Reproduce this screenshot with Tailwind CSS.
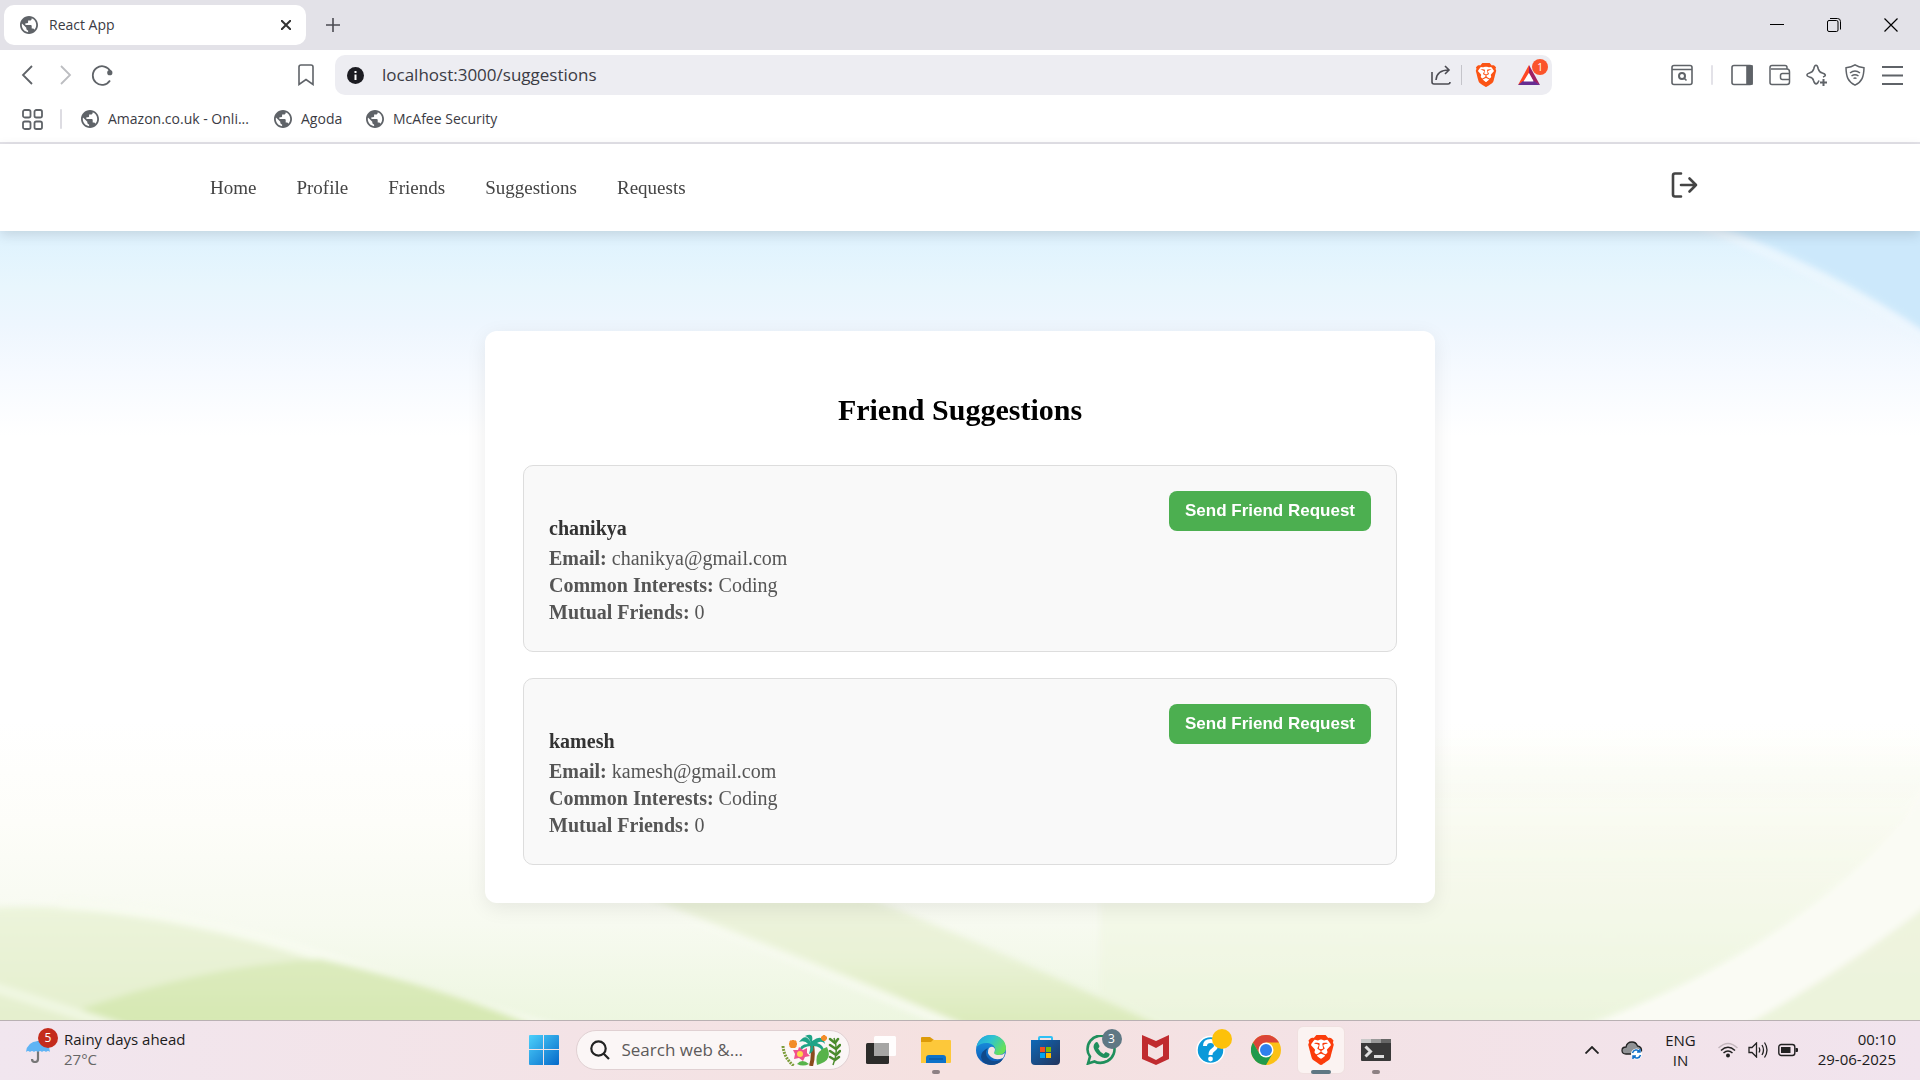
<!DOCTYPE html>
<html lang="en">
<head>
<meta charset="utf-8">
<title>React App</title>
<script src="https://cdn.jsdelivr.net/npm/@tailwindcss/browser@4"></script>
</head>
<body class="flex min-h-screen flex-col bg-white font-['Open_Sans',sans-serif] text-[#3b3b44]">

<svg class="hidden" aria-hidden="true">
  <symbol id="globe" viewBox="2 2 20 20"><path fill="#5f6368" d="M12 2C6.48 2 2 6.48 2 12s4.48 10 10 10 10-4.480 10-10S17.520 2 12 2zm-1 17.930c-3.950-.490-7-3.850-7-7.930 0-.620.080-1.210.210-1.790L9 15v1c0 1.100.900 2 2 2v1.930zm6.900-2.540c-.260-.810-1-1.390-1.900-1.390h-1v-3c0-.550-.450-1-1-1H8v-2h2c.550 0 1-.450 1-1V7h2c1.100 0 2-.900 2-2v-.410c2.930 1.190 5 4.060 5 7.410 0 2.080-.800 3.970-2.100 5.390z"/></symbol>
  <symbol id="brave" viewBox="0 0 24 24">
    <path fill="#fff" d="M5 4h14l2 4-4 11-5 3-5-3L3 8z"/>
    <path d="M15.68 0l2.096 2.38s1.84-.512 2.709.358c.868.87 1.584 1.638 1.584 1.638l-.562 1.381.715 2.047s-2.104 7.98-2.35 8.955c-.486 1.919-.818 2.66-2.198 3.633-1.38.972-3.884 2.66-4.293 2.916-.409.256-.92.692-1.38.692-.46 0-.97-.436-1.38-.692a185.796 185.796 0 01-4.293-2.916c-1.38-.973-1.712-1.714-2.197-3.633-.247-.975-2.351-8.955-2.351-8.955l.715-2.047-.562-1.381s.716-.768 1.585-1.638c.868-.87 2.708-.358 2.708-.358L8.321 0h7.36zm-3.679 14.936c-.14 0-1.038.317-1.758.69-.72.373-1.242.637-1.409.742-.167.104-.065.301.087.409.152.107 2.194 1.69 2.393 1.866.198.175.489.464.687.464.198 0 .49-.29.688-.464.198-.175 2.24-1.759 2.392-1.866.152-.108.254-.305.087-.41-.167-.104-.689-.368-1.41-.741-.72-.373-1.617-.69-1.757-.69zm0-11.278s-.409.001-1.022.206-1.278.46-1.584.46c-.307 0-2.581-.434-2.581-.434S4.119 7.152 4.119 7.849c0 .697.339.881.68 1.243l2.02 2.149c.192.203.59.511.356 1.066-.235.555-.58 1.26-.196 1.977.384.716 1.042 1.194 1.464 1.115.421-.08 1.412-.598 1.776-.834.364-.237 1.518-1.19 1.518-1.554 0-.365-1.193-1.02-1.413-1.168-.22-.15-1.226-.725-1.247-.95-.02-.227-.012-.293.284-.851.297-.559.831-1.304.742-1.8-.089-.495-.95-.753-1.565-.986-.615-.232-1.799-.671-1.947-.74-.148-.068-.11-.133.339-.175.448-.043 1.719-.212 2.292-.052.573.16 1.552.403 1.632.532.079.13.149.134.067.579-.081.445-.5 2.581-.541 2.96-.04.38-.12.63.288.724.409.094 1.097.256 1.333.256s.924-.162 1.333-.256c.408-.093.329-.344.288-.723-.04-.38-.46-2.516-.541-2.961-.082-.445-.012-.45.067-.579.08-.129 1.059-.372 1.632-.532.573-.16 1.845.009 2.292.052.449.042.487.107.339.175-.148.069-1.332.508-1.947.74-.615.233-1.476.49-1.565.986-.09.496.445 1.241.742 1.8.297.558.304.624.284.85-.02.226-1.026.802-1.247.95-.22.15-1.413.804-1.413 1.169 0 .364 1.154 1.317 1.518 1.554.364.236 1.355.755 1.776.834.422.079 1.08-.4 1.464-1.115.384-.716.039-1.422-.195-1.977-.235-.555.163-.863.355-1.066l2.02-2.149c.341-.362.68-.546.68-1.243 0-.697-2.695-3.96-2.695-3.96s-2.274.436-2.58.436c-.307 0-.972-.256-1.585-.461-.613-.205-1.022-.206-1.022-.206z"/>
  </symbol>
</svg>

<!-- Tab strip -->
<div class="flex h-[50px] items-center bg-[#e3e2e8] pl-1">
  <div class="flex h-10 w-[302px] items-center rounded-[10px] bg-white pr-[10px] pl-4">
    <svg class="size-[18px]"><use href="#globe"/></svg>
    <span class="ml-[11px] flex-1 text-sm">React App</span>
    <button aria-label="Close tab" class="flex size-5 items-center justify-center"><svg class="size-[10px]" viewBox="0 0 10 10" stroke="#333" stroke-width="2"><path d="M0 0l10 10M10 0L0 10"/></svg></button>
  </div>
  <button aria-label="New tab" class="ml-5 flex size-[14px] items-center justify-center"><svg class="size-[14px]" viewBox="0 0 14 14" stroke="#4b4b52" stroke-width="1.600"><path d="M7 0v14M0 7h14"/></svg></button>
  <div class="ml-auto flex items-center pr-px text-black">
    <button aria-label="Minimize" class="flex h-12 w-[57px] items-center justify-center"><svg class="size-[14px]" viewBox="0 0 14 14" stroke="currentColor"><path d="M0 6.500h14"/></svg></button>
    <button aria-label="Restore" class="flex h-12 w-[57px] items-center justify-center"><svg class="size-[14px]" viewBox="0 0 14 14" fill="none" stroke="currentColor"><rect x=".5" y="2.500" width="10.500" height="11" rx="1.500"/><path d="M3 .5h7.500q3 0 3 3v8"/></svg></button>
    <button aria-label="Close" class="flex h-12 w-[57px] items-center justify-center"><svg class="size-[14px]" viewBox="0 0 14 14" stroke="currentColor" stroke-width="1.200"><path d="M.5.5l13 13M13.500.5l-13 13"/></svg></button>
  </div>
</div>

<!-- Toolbar -->
<div class="flex h-[50px] items-center">
  <div class="flex w-[335px] items-center pl-4">
    <button aria-label="Back" class="flex size-6 items-center justify-center"><svg class="size-5" viewBox="0 0 20 20" fill="none" stroke="#5f6368" stroke-width="1.800"><path d="M14 1L5 10l9 9"/></svg></button>
    <button aria-label="Forward" class="ml-[13px] flex size-6 items-center justify-center"><svg class="size-5" viewBox="0 0 20 20" fill="none" stroke="#bcbdc1" stroke-width="1.800"><path d="M6 1l9 9-9 9"/></svg></button>
    <button aria-label="Reload" class="ml-[13px] flex size-6 items-center justify-center"><svg class="size-[22px]" viewBox="0 0 22 22" fill="none" stroke="#5f6368" stroke-width="1.800"><path d="M19 16.500A9.300 9.300 0 1 1 19.500 7.500"/><circle cx="18.800" cy="8.700" r="2.600" fill="#5f6368" stroke="none"/></svg></button>
    <button aria-label="Bookmark this page" class="ml-auto mr-[17px] flex size-6 items-center justify-center"><svg class="h-[22px] w-4" viewBox="0 0 16 22" fill="none" stroke="#5f6368" stroke-width="1.600"><path d="M1 3q0-2 2-2h10q2 0 2 2v17.500l-7-5-7 5z"/></svg></button>
  </div>
  <div class="flex h-10 min-w-0 flex-1 items-center rounded-[10px] bg-[#ededf2] pr-[10px] pl-3">
    <svg class="size-[17px]" viewBox="0 0 17 17"><circle cx="8.500" cy="8.500" r="8.500" fill="#1c1c22"/><path stroke="#fff" stroke-width="2" d="M8.500 4v2M8.500 7.500V13"/></svg>
    <input aria-label="Address" value="localhost:3000/suggestions" class="ml-[18px] min-w-0 flex-1 bg-transparent text-[17px] text-[#3b3b44] outline-none">
    <button aria-label="Share"><svg class="size-5" viewBox="0 0 20 20" fill="none" stroke="#4b4b52" stroke-width="1.600"><path d="M1 7v10q0 2 2 2h14q2 0 2-2"/><path d="M5 15C5.500 8 10 5 18 5M14 1l4 4-4 4"/></svg></button>
    <span class="ml-[10px] h-5 w-px bg-[#c4c4ca]"></span>
    <button aria-label="Brave Shields" class="ml-3"><svg class="size-6" fill="#fb5415"><use href="#brave"/></svg></button>
    <button aria-label="Brave Rewards" class="relative ml-[18px]"><svg class="h-6 w-[26px]" viewBox="0 0 26 24"><path fill="#ff4724" d="M13 2v9L7.500 19 2 22z"/><path fill="#9e1f63" d="M13 2l11 20-6-3-5-9z"/><path fill="#662d91" d="M2 22l5-4h11l6 4z"/><path fill="#fff" d="M12.700 10L7.500 18.500h10z"/></svg><span class="absolute -top-1 left-4 flex size-4 items-center justify-center rounded-full bg-[#fb542b] text-[10px] leading-none text-white">1</span></button>
  </div>
  <div class="flex w-[368px] items-center justify-end pr-[17px]">
    <button aria-label="Search tabs"><svg class="size-[22px]" viewBox="0 0 22 22" fill="none" stroke="#5f6368" stroke-width="1.600"><rect x="1" y="1.500" width="20" height="19" rx="2"/><path d="M1 5.500h20M13 14l2.500 2.500"/><circle cx="11" cy="12" r="3" stroke-width="2"/></svg></button>
    <span class="ml-[18px] h-5 w-[2px] rounded bg-[#e3e2e8]"></span>
    <button aria-label="Sidebar" class="ml-[18px]"><svg class="size-[22px]" viewBox="0 0 22 22" fill="none" stroke="#5f6368" stroke-width="1.600"><rect x="1" y="1.500" width="20" height="19" rx="2"/><path fill="#5f6368" d="M16 2h5v18h-5z"/></svg></button>
    <button aria-label="Wallet" class="ml-4"><svg class="size-[22px]" viewBox="0 0 22 22" fill="none" stroke="#5f6368" stroke-width="1.500"><path d="M18 5V3.500q0-2-2-2H3q-2 0-2 2v15q0 2 2 2h15q2.500 0 2.500-2.500v-10q0-3-2.500-3H2"/><path d="M21 9.500h-7.500q-2 0-2 2v2q0 2 2 2H21"/></svg></button>
    <button aria-label="Leo AI" class="ml-[15px]"><svg class="size-[22px]" viewBox="0 0 22 22" fill="none" stroke="#5f6368" stroke-width="1.600"><path stroke-linejoin="round" d="M13 16.500c-1.500 4-4 5-5.500 0C7 14 6 13.500 3.500 13c-3.500-1-3.500-3 0-4C6 8.300 7 7.500 7.700 5c1-5 3.600-5 4.600 0 .7 2.500 1.500 3.300 4 4 3.700 1 4 3 .7 4"/><path stroke-width="2" d="M17.500 15v7M14 18.500h7"/></svg></button>
    <button aria-label="VPN" class="ml-4"><svg class="size-[22px]" viewBox="0 0 22 22" fill="none" stroke="#5f6368" stroke-width="1.500"><path d="M11 .8c3 2 5 2.500 9 3-.2 9-2 14-9 17.400C4 17.800 2.200 13 2 3.800c4-.5 6-1 9-3z"/><path d="M6 9q5-4 10 0M7.500 12q3.500-2.500 7 0M9.500 14.500q1.500-1 3 0"/></svg></button>
    <button aria-label="Menu" class="ml-4"><svg class="size-[21px]" viewBox="0 0 21 21" stroke="#5f6368" stroke-width="2"><path d="M0 2h21M0 10.500h21M0 19h21"/></svg></button>
  </div>
</div>

<!-- Bookmarks bar -->
<div class="flex h-11 items-center border-b-2 border-[#e3e2e8] pb-1 pl-[22px] text-sm">
  <button aria-label="All apps"><svg class="size-[21px]" viewBox="0 0 21 21" fill="none" stroke="#5f6368" stroke-width="1.800"><rect x="1" y="1" width="7.500" height="7.500" rx="1.800"/><rect x="12.500" y="1" width="7.500" height="7.500" rx="1.800"/><rect x="1" y="12.500" width="7.500" height="7.500" rx="1.800"/><rect x="12.500" y="12.500" width="7.500" height="7.500" rx="1.800"/></svg></button>
  <span class="ml-[17px] h-5 w-[2px] rounded bg-[#dddce2]"></span>
  <a href="#" class="ml-[19px] flex w-[193px] items-center gap-[9px]"><svg class="size-[18px]"><use href="#globe"/></svg>Amazon.co.uk - Onli...</a>
  <a href="#" class="flex w-[92px] items-center gap-[9px]"><svg class="size-[18px]"><use href="#globe"/></svg>Agoda</a>
  <a href="#" class="flex items-center gap-[9px]"><svg class="size-[18px]"><use href="#globe"/></svg>McAfee Security</a>
</div>

<!-- Web app -->
<div class="flex flex-1 flex-col font-['Liberation_Serif',serif]">
  <header class="relative z-10 bg-white shadow-[0_4px_12px_rgba(0,0,0,0.12)]">
    <div class="mx-auto flex h-[87px] max-w-[1500px] items-center justify-between pr-3">
      <nav class="flex gap-10 pt-[2px] text-[19px] text-[#444]">
        <a href="#">Home</a><a href="#">Profile</a><a href="#">Friends</a><a href="#">Suggestions</a><a href="#">Requests</a>
      </nav>
      <button aria-label="Log out" class="pb-[6px]"><svg class="h-[26px] w-7" viewBox="0 0 28 26" fill="none" stroke="#444" stroke-width="2.600" stroke-linecap="round" stroke-linejoin="round"><path d="M11 1.500H5q-2 0-2 2v19q0 2 2 2h6M11 13h15M19.500 6.500l6.500 6.500-6.500 6.500"/></svg></button>
    </div>
  </header>

  <main class="relative flex-1 px-6 pt-[100px] pb-[114px]">
    <svg class="absolute inset-0 size-full" viewBox="0 0 1920 789" preserveAspectRatio="none" aria-hidden="true">
      <defs>
        <linearGradient id="sky" x1="0" y1="0" x2="0" y2="1"><stop offset="0" stop-color="#def2fe"/><stop offset=".07" stop-color="#e8f6fd"/><stop offset=".12" stop-color="#eef6fe"/><stop offset=".18" stop-color="#f6faff"/><stop offset=".26" stop-color="#fff"/><stop offset=".62" stop-color="#fff"/><stop offset=".75" stop-color="#fdfdf9"/><stop offset=".88" stop-color="#f7faf0"/><stop offset="1" stop-color="#edf6e0"/></linearGradient>
        <linearGradient id="meadow" x1="0" y1="0" x2="0" y2="1"><stop offset="0" stop-color="#f1f6e0" stop-opacity="0"/><stop offset=".5" stop-color="#f3f7e6"/><stop offset="1" stop-color="#ebf3da"/></linearGradient>
        <linearGradient id="hillA" x1="0" y1="0" x2="0" y2="1"><stop offset="0" stop-color="#ecf4db"/><stop offset="1" stop-color="#e4efcd"/></linearGradient>
        <linearGradient id="hillB" x1="0" y1="0" x2="0" y2="1"><stop offset="0" stop-color="#dcebbe"/><stop offset="1" stop-color="#d6e8b2"/></linearGradient>
        <linearGradient id="ridge" x1="0" y1="0" x2="0" y2="1"><stop offset="0" stop-color="#edf3dd"/><stop offset=".5" stop-color="#e9f2d6"/><stop offset="1" stop-color="#dbeaba"/></linearGradient>
        <linearGradient id="edge" x1="0" y1="0" x2="1" y2="0"><stop offset="0" stop-color="#fafcf4" stop-opacity=".2"/><stop offset="1" stop-color="#fafcf4" stop-opacity=".8"/></linearGradient>
        <filter id="soft" x="-5%" y="-5%" width="110%" height="110%"><feGaussianBlur stdDeviation="3"/></filter>
      </defs>
      <path fill="url(#sky)" d="M0 0h1920v789H0z"/>
      <g filter="url(#soft)">
        <path fill="#cce8fb" d="M1708-10Q1830 35 1930 104V-10z"/>
        <path fill="none" stroke="#eef7fd" stroke-opacity=".7" stroke-width="9" d="M1700-6Q1825 42 1930 112"/>
        <path fill="url(#meadow)" d="M1100 490H1930V800H1100Z" opacity=".6"/>
        <path fill="#fafbf4" d="M1585 795Q1790 720 1905 589L1930 540V672Q1850 735 1745 795z"/>
        <path fill="#ecf3db" opacity=".8" d="M1745 795Q1850 735 1930 672V795z"/>
        <path fill="url(#hillA)" d="M-10 677Q130 668 320 728L440 795H-10z"/>
        <path fill="none" stroke="#f8fbf0" stroke-opacity=".8" stroke-width="12" d="M60 672Q190 680 330 728T560 800"/>
        <path fill="url(#hillB)" d="M70 782Q200 735 320 728Q440 755 535 795H110z"/>
        <path fill="none" stroke="#f0f7e2" stroke-width="10" d="M-10 755L130 800"/>
        <path fill="url(#ridge)" d="M630 660H850Q980 710 1160 795H960Q790 725 630 660z"/>
        <path fill="none" stroke="url(#edge)" stroke-width="10" d="M620 660Q790 725 960 797"/>
      </g>
    </svg>

    <section class="relative mx-auto flex max-w-[950px] flex-col rounded-xl bg-white px-[38px] pt-[59px] pb-[38px] shadow-[0_5px_20px_rgba(0,0,0,0.08)]">
      <h2 class="mb-[35px] text-center text-[30px] leading-10 font-bold text-black">Friend Suggestions</h2>
      <ul class="flex flex-col gap-[26px]">
        <li class="flex items-start justify-between rounded-[10px] border border-[#ddd] bg-[#f9f9f9] p-[25px] text-[20px] leading-[27px] text-[#555]">
          <div class="pt-6">
            <h3 class="mb-[3px] font-bold text-[#333]">chanikya</h3>
            <p><strong>Email:</strong> chanikya@gmail.com</p>
            <p><strong>Common Interests:</strong> Coding</p>
            <p><strong>Mutual Friends:</strong> 0</p>
          </div>
          <button class="h-10 rounded-lg bg-[#4caf50] px-4 font-['Liberation_Sans',sans-serif] text-[17px] leading-5 font-bold text-white">Send Friend Request</button>
        </li>
        <li class="flex items-start justify-between rounded-[10px] border border-[#ddd] bg-[#f9f9f9] p-[25px] text-[20px] leading-[27px] text-[#555]">
          <div class="pt-6">
            <h3 class="mb-[3px] font-bold text-[#333]">kamesh</h3>
            <p><strong>Email:</strong> kamesh@gmail.com</p>
            <p><strong>Common Interests:</strong> Coding</p>
            <p><strong>Mutual Friends:</strong> 0</p>
          </div>
          <button class="h-10 rounded-lg bg-[#4caf50] px-4 font-['Liberation_Sans',sans-serif] text-[17px] leading-5 font-bold text-white">Send Friend Request</button>
        </li>
      </ul>
    </section>
  </main>
</div>

<!-- Taskbar -->
<footer class="relative z-10 grid h-[60px] grid-cols-[1fr_auto_1fr] items-center border-t border-[#b9b1b3] bg-linear-to-r from-[#f1e6ef] via-[#f5e1e0] to-[#f1e4ee] pb-[2px] text-[#1b1b1b]">
  <button class="flex items-center pl-6 text-left text-[15px] leading-5">
    <span class="relative mr-[14px] block size-[26px]">
      <svg class="size-[26px]" viewBox="0 0 26 26"><path fill="none" stroke="#777" stroke-width="2.200" d="M14 4v18q0 3-3 3t-3-3"/><path fill="#5fb4f5" d="M2 15Q3 5 14 4q11 1 12 11-2-2-4 0-2-2-4 0-2-2-4 0-2-2-4 0-2-2-4 0-2-2-4 0z"/></svg>
      <span class="absolute -top-[9px] left-[14px] flex size-5 items-center justify-center rounded-full bg-[#c42b1c] text-xs leading-none text-white">5</span>
    </span>
    <span class="pb-px"><span class="block">Rainy days ahead</span><span class="block text-[#666]">27°C</span></span>
  </button>

  <div class="flex items-center">
    <button aria-label="Start" class="flex w-[55px] justify-center"><svg class="size-[30px]" viewBox="0 0 30 30"><defs><linearGradient id="win" x1="0" y1="0" x2="1" y2="1"><stop offset="0" stop-color="#4cd0fb"/><stop offset="1" stop-color="#0569c9"/></linearGradient></defs><path fill="url(#win)" d="M1 0h13v14H0V1q0-1 1-1zM15 0h14q1 0 1 1v13H15zM0 15h14v15H1q-1 0-1-1zM15 15h15v14q0 1-1 1H15z"/></svg></button>
    <label class="mx-1 flex h-10 w-[274px] items-center rounded-full border border-[#e0d0d2] bg-[#fbf6f6] pr-2 pl-[13px]">
      <svg class="size-5" viewBox="0 0 20 20" fill="none" stroke="#222" stroke-width="2.200"><circle cx="8.500" cy="8.500" r="7.200"/><path d="M13.500 13.500l5.500 5.500"/></svg>
      <input aria-label="Search" placeholder="Search web &amp;..." class="ml-2 w-[150px] bg-transparent pl-1 text-[17px] outline-none placeholder:text-[#5d5a5a]">
      <svg class="ml-auto h-8 w-[60px]" viewBox="0 0 60 32" fill="none">
        <path stroke="#8a4b1c" stroke-width="4" d="M30 32q3-10 1-21"/>
        <path fill="#1fa487" d="M30 9Q25-2 18 8q6-2 9 2-9 0-9 9 4-7 12-7l-2 8q6-3 4-8 9 0 10 8 3-8-6-11 5-3 8 1-2-11-13-3Q33-2 24 2q4 1 6 7z"/>
        <path stroke="#7c9c3a" stroke-width="3" stroke-dasharray="2 1" d="M2 12q1 12 11 20"/>
        <path stroke="#4b8b2c" stroke-width="1.500" d="M53 4q5 13-1 27"/>
        <path stroke="#4b8b2c" stroke-width="2.500" stroke-linecap="round" d="M54 9l-5-4M54 9l3-4M55 15l-6-4M55 15l4-4M55 21l-6-4M55 21l4-4M54 26l-5-3M54 26l4-3"/>
        <path fill="#58b34a" d="M36 31q-3-14 10-18 6 13-7 17zM16 30q5-6 12 0-6 3-12 0z"/>
        <path fill="#f0508c" d="M18 13l4 3 4-2 0 5 3 3-5 1-2 4-4-3-5 1 1-5-2-4 5 0z"/><circle cx="19" cy="20" r="3" fill="#ffd54a"/>
        <path stroke="#f28c28" stroke-width="2.500" d="M12 6v8M8 10h8M9 7l6 6M15 7l-6 6M43 1v6M40 4h6M41 2l4 4M45 2l-4 4"/>
      </svg>
    </label>
    <button aria-label="Task view" class="flex w-[55px] justify-center"><svg class="size-[30px]" viewBox="0 0 30 30"><rect y="8" width="23" height="21" rx="1.500" fill="#2c2c2a"/><rect x="8" y="1" width="22" height="20" rx="1.500" fill="#fff" opacity=".93"/><path fill="#a6a5a4" d="M8 8h15v13H9q-1 0-1-1z"/></svg></button>
    <button aria-label="File Explorer" class="relative flex w-[55px] justify-center"><svg class="size-[30px]" viewBox="0 0 30 30"><path fill="#dd9b09" d="M0 3q0-1 1-1h8l4 3v6H0z"/><path fill="#fdc83a" d="M0 7h10l2-2h17q1 0 1 1v21q0 1-1 1H0z"/><path fill="#0c72c9" d="M5 28v-5q0-3 3-3h14q3 0 3 3v5z"/><path stroke="#084f93" d="M8 24h14"/></svg><span class="absolute -bottom-[9px] h-1 w-2 rounded bg-[#8d8184]"></span></button>
    <button aria-label="Microsoft Edge" class="flex w-[55px] justify-center"><svg class="size-[30px]" viewBox="0 0 30 30"><defs><linearGradient id="edgeTop" x1="0" y1="0" x2="1" y2=".5"><stop offset="0" stop-color="#1fa0e0"/><stop offset=".5" stop-color="#2fc3d0"/><stop offset="1" stop-color="#66e05a"/></linearGradient><linearGradient id="edgeSide" x1="0" y1="0" x2="0" y2="1"><stop offset="0" stop-color="#1b9be6"/><stop offset="1" stop-color="#0c55b4"/></linearGradient></defs><circle cx="15" cy="15" r="15" fill="url(#edgeSide)"/><path fill="url(#edgeTop)" d="M.5 12C2 4 8 0 15 0c9 0 15 6 15 13 0 5-4 7-8 7-3 0-4-1-4-2s2-2 1-5C17 7 6 6 .5 12z"/><path fill="#114a8b" d="M12 13q-4 5 0 10 5 6 15 1-4 6-12 6-9-1-10-8 0-6 7-9z"/><path fill="#f5e3e2" d="M13 13q4-3 6 1 0 2-1 4 1 2 5 2 4 0 6-2-1 4-2 5-7 3-12-1-5-4-2-9z"/></svg></button>
    <button aria-label="Microsoft Store" class="flex w-[55px] justify-center"><svg class="size-[30px]" viewBox="0 0 30 30"><defs><linearGradient id="store" x1="0" y1="0" x2="1" y2="1"><stop offset="0" stop-color="#0e69b8"/><stop offset="1" stop-color="#23345c"/></linearGradient></defs><path fill="none" stroke="#2fc0f5" stroke-width="2" d="M8 6V3q0-1 1-1h11q1 0 1 1v3"/><path fill="url(#store)" d="M0 5h29v21q0 4-4 4H4q-4 0-4-4z"/><path fill="#f25022" d="M9 12h5v5H9z"/><path fill="#7fba00" d="M15 12h5v5h-5z"/><path fill="#00a4ef" d="M9 18h5v5H9z"/><path fill="#ffb900" d="M15 18h5v5h-5z"/></svg></button>
    <button aria-label="WhatsApp" class="relative flex w-[55px] justify-center"><svg class="size-[30px]" viewBox="0 0 30 30"><path fill="none" stroke="#1f8f5c" stroke-width="2.600" d="M2 28.500l2-7Q1.500 18 1.500 14.500a13.500 13.500 0 1 1 20 11.500q-7 3.500-13 .5z"/><path fill="#1f8f5c" d="M9 8q2-2 3 0l1.500 3q0 1-1.300 2.500 2 4 5.500 5.500l2-2q3 1 4 2-.5 4-5 4C13 22 8 16 7.500 12q0-2.500 1.500-4z"/></svg><span class="absolute -top-[6px] left-[28px] flex size-5 items-center justify-center rounded-full bg-[#5f7884] text-xs leading-none text-white">3</span></button>
    <button aria-label="McAfee" class="flex w-[55px] justify-center"><svg class="size-[30px]" viewBox="0 0 30 30"><path fill="#c02b2f" d="M1 0l14 6L28 0v24l-13 6-14-6zM7 9v12l8 4 7-4V9l-7 4z"/></svg></button>
    <button aria-label="Get Help" class="relative flex w-[55px] justify-center"><svg class="size-[30px]" viewBox="0 0 30 30"><circle cx="14.500" cy="15" r="13.500" fill="#0a99d9" stroke="#fff" stroke-width="1.500"/><path fill="none" stroke="#fff" stroke-width="4" d="M9 11q0-5 5.500-5T20 11q0 2-3 4-2.500 1.500-2.500 5"/><circle cx="14.500" cy="24" r="2.400" fill="#fff"/></svg><span class="absolute -top-[6px] left-[28px] size-5 rounded-full bg-[#fdc10a]"></span></button>
    <button aria-label="Chrome" class="flex w-[55px] justify-center"><svg class="size-[30px]" viewBox="0 0 30 30"><circle cx="15" cy="15" r="15" fill="#fbc116"/><path fill="#db4437" d="M2 7.500A15 15 0 0 1 28 7.500H15L8.500 18.800z"/><path fill="#209a4c" d="M2 7.500A15 15 0 0 0 15 30l6.500-11.300H8.500z"/><circle cx="15" cy="15" r="7.500" fill="#fff"/><circle cx="15" cy="15" r="6" fill="#2f80ed"/></svg></button>
    <button aria-label="Brave" class="relative flex h-12 w-[55px] items-center justify-center"><span class="flex size-12 items-center justify-center rounded-md border border-[#f0e0e0] bg-[#fbf3f2]"><svg class="size-[30px]" fill="#fb3c0b"><use href="#brave"/></svg></span><span class="absolute bottom-0 h-1 w-5 rounded bg-[#5f7884]"></span></button>
    <button aria-label="Terminal" class="relative flex w-[55px] justify-center"><svg class="size-[30px]" viewBox="0 0 30 30"><path fill="#393939" d="M0 4h30v21q0 1-1 1H1q-1 0-1-1z"/><path fill="#c8c8c8" d="M0 4h10v4H0z"/><path fill="#999" d="M10 4h10v4H10z"/><path fill="#666" d="M20 4h10v4H20z"/><path fill="none" stroke="#ddd" stroke-width="3" d="M4.500 11.500l5 5-5 5M13 21.500h10"/></svg><span class="absolute -bottom-[9px] h-1 w-2 rounded bg-[#8d8184]"></span></button>
  </div>

  <div class="flex items-center justify-end pr-6 text-[15px] leading-5">
    <button aria-label="Show hidden icons"><svg class="h-2 w-[14px]" viewBox="0 0 14 8" fill="none" stroke="#222" stroke-width="1.800"><path d="M.5 7.500L7 1l6.500 6.500"/></svg></button>
    <button aria-label="OneDrive" class="ml-[22px]"><svg class="h-5 w-[22px]" viewBox="0 0 22 20"><path fill="#909295" stroke="#222" stroke-width="1.300" d="M5 14Q1 14 1 10.500T5 7q1-5 6-5 4 0 5.500 4Q21 7 20.500 11L18 14z"/><circle cx="15.500" cy="14" r="5.500" fill="#fff"/><path fill="none" stroke="#1170c9" stroke-width="1.500" d="M11.500 13a4 4 0 0 1 7-1.500M19.500 15a4 4 0 0 1-7 1.500M19 9v3h-3M12 19v-3h3"/></svg></button>
    <button class="ml-[22px] text-center leading-5"><span class="block">ENG</span><span class="block">IN</span></button>
    <button aria-label="Network, volume and battery" class="ml-[22px] flex items-center gap-[10px]">
      <svg class="h-4 w-5" viewBox="0 0 20 16" fill="none" stroke="#222" stroke-width="1.500"><path stroke="#c3b7bd" d="M.5 6q9.500-9 19 0"/><path d="M3 8.500q7-6.500 14 0M5.500 11q4.500-4 9 0"/><circle cx="10" cy="13.500" r="2" fill="#222" stroke="none"/></svg>
      <svg class="h-4 w-5" viewBox="0 0 20 16" fill="none" stroke="#222" stroke-width="1.300"><path d="M1 5.500h3L8.500 1v14L4 10.500H1z"/><path d="M11 5.500q1.500 2.500 0 5M14 3q3 5 0 10M16.500.5q5 7.500 0 15"/></svg>
      <svg class="h-[14px] w-5" viewBox="0 0 20 14"><rect x=".8" y="1.500" width="16" height="11" rx="2.500" fill="none" stroke="#222" stroke-width="1.400"/><path fill="#222" d="M3 4h9.500v6H3zM17.500 5h1.500q1 0 1 1v2q0 1-1 1h-1.500z"/></svg>
    </button>
    <button class="ml-5 pb-px text-right leading-5"><span class="block">00:10</span><span class="block">29-06-2025</span></button>
  </div>
</footer>
</body>
</html>
